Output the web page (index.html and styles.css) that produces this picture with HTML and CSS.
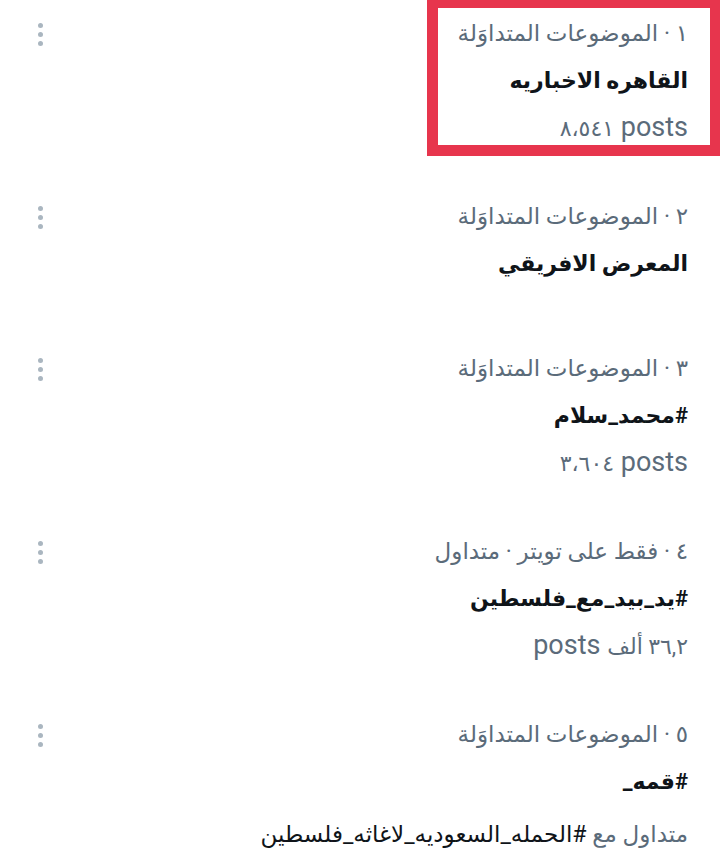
FILE: index.html
```html
<!DOCTYPE html>
<html lang="ar" dir="rtl">
<head>
  <meta charset="UTF-8" />
  <meta name="viewport" content="width=device-width, initial-scale=1.0"/>
  <title>المتداول</title>
  <link rel="stylesheet" href="styles.css">
</head>
<body>

<ul class="trends">
  <li class="trend selected">
    <div class="trend-text">
      <div class="meta">١ · الموضوعات المتداوَلة</div>
      <div class="name">القاهره الاخباريه</div>
      <div class="count">posts <span class="num">٨،٥٤١</span></div>
    </div>
    <span class="more"><i></i><i></i><i></i></span>
  </li>
  <li class="trend">
    <div class="trend-text">
      <div class="meta">٢ · الموضوعات المتداوَلة</div>
      <div class="name">المعرض الافريقي</div>
    </div>
    <span class="more"><i></i><i></i><i></i></span>
  </li>
  <li class="trend">
    <div class="trend-text">
      <div class="meta">٣ · الموضوعات المتداوَلة</div>
      <div class="name">#محمد_سلام</div>
      <div class="count">posts <span class="num">٣،٦٠٤</span></div>
    </div>
    <span class="more"><i></i><i></i><i></i></span>
  </li>
  <li class="trend">
    <div class="trend-text">
      <div class="meta">٤ · فقط على تويتر · متداول</div>
      <div class="name">#يد_بيد_مع_فلسطين</div>
      <div class="count"><span class="num">٣٦,٢ ألف</span> posts</div>
    </div>
    <span class="more"><i></i><i></i><i></i></span>
  </li>
  <li class="trend">
    <div class="trend-text">
      <div class="meta">٥ · الموضوعات المتداوَلة</div>
      <div class="name">#قمه_</div>
      <div class="with">متداول مع <b>#الحمله_السعوديه_لاغاثه_فلسطين</b></div>
    </div>
    <span class="more"><i></i><i></i><i></i></span>
  </li>
</ul>

</body>
</html>
```

FILE: styles.css
```css
* {
  box-sizing: border-box;
}
body {
  margin: 0;
  background: #fff;
  font-family: Roboto, "DejaVu Sans", sans-serif;
  color: #0f1419;
}
.trends {
  list-style: none;
  margin: 0;
  padding: 0;
}
.trend {
  display: flex;
  justify-content: space-between;
  align-items: flex-start;
  min-height: 152px;
  padding: 10px 32px 32px 38px;
}
.trend-text > div {
  height: 47px;
  line-height: 47px;
  white-space: nowrap;
}
.meta {
  font-size: 23px;
  color: #5b6b7a;
}
.name {
  font-size: 22px;
  font-weight: bold;
}
.count {
  font-size: 27px;
  color: #5b6b7a;
}
.count .num {
  font-size: 22px;
}
.trend-text > .with {
  margin-top: 6px;
  font-size: 23px;
  color: #5b6b7a;
}
.with b {
  font-weight: normal;
  color: #0f1419;
}
.more {
  display: flex;
  flex-direction: column;
  gap: 4px;
  padding-top: 13px;
}
.more i {
  display: block;
  width: 5px;
  height: 5px;
  border-radius: 50%;
  background: #aab6c0;
}
.trend.selected {
  position: relative;
}
.trend.selected::after {
  content: "";
  box-sizing: border-box;
  position: absolute;
  top: -3px;
  left: 427px;
  right: -1px;
  height: 159px;
  border: 11px solid #e7354d;
}
```
